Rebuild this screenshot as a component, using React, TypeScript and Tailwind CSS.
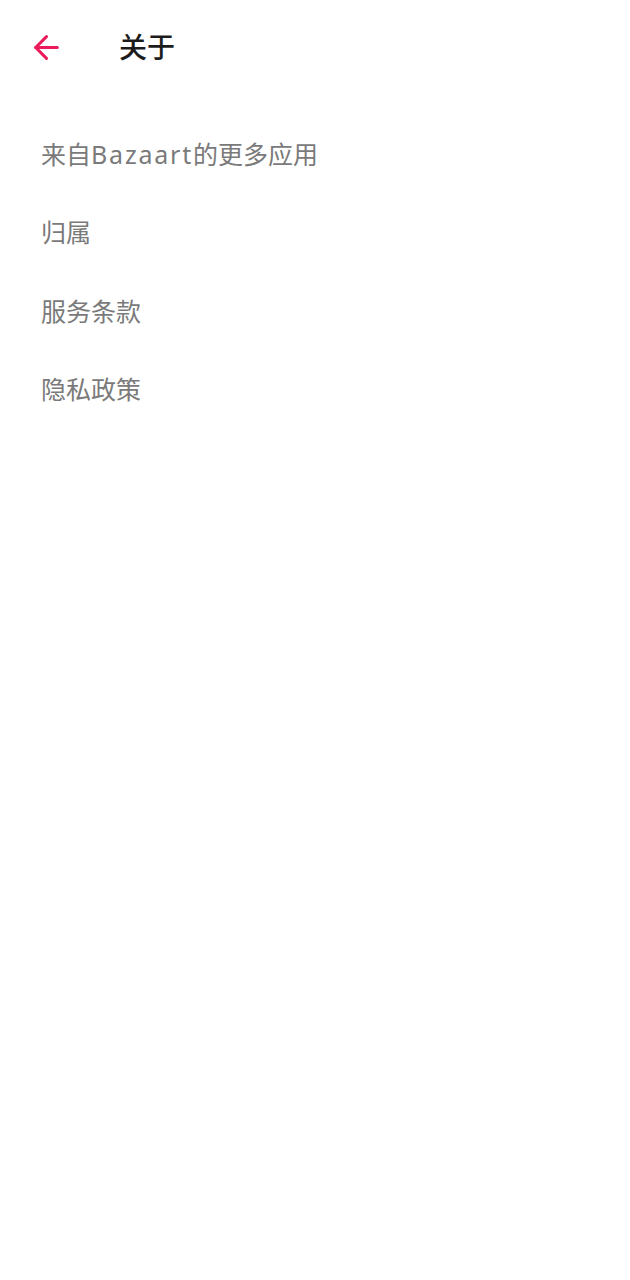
import { ArrowLeft } from "lucide-react";

const items = [
  <>
    来自<span className="tracking-[1.8px]">Bazaart</span>的更多应用
  </>,
  "归属",
  "服务条款",
  "隐私政策",
];

export default function App() {
  return (
    <div
      className="min-h-[1280px] w-[630px] bg-white"
      style={{ fontFamily: '"Noto Sans", "Noto Sans CJK SC", sans-serif' }}
    >
      {/* Header */}
      <div className="flex h-[94px] items-center">
        <button className="ml-[27px] flex h-[38px] w-[38px] items-center justify-center text-[#ec1c5c]">
          <ArrowLeft size={37} strokeWidth={2} />
        </button>
        <h1 className="ml-[54px] text-[28px] font-medium text-[#1c1c1c]">关于</h1>
      </div>

      {/* List */}
      <div className="mt-[21px] flex flex-col">
        {items.map((item, i) => (
          <div key={i} className="flex h-[78.5px] items-center px-[41px] text-[25px] text-[#7a7a7a]">
            {item}
          </div>
        ))}
      </div>
    </div>
  );
}
